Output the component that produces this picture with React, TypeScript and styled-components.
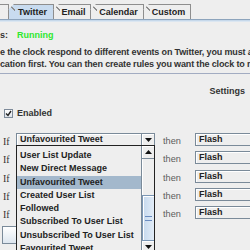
import * as React from "react";
import styled, { createGlobalStyle } from "styled-components";

const GlobalStyle = createGlobalStyle`
  html, body {
    margin: 0;
    padding: 0;
    background: #eeeeee;
    overflow: hidden;
  }
`;

const Frame = styled.div`
  width: 250px;
  height: 250px;
  overflow: hidden;
  background: #eeeeee;
  font-family: "Liberation Sans", Arial, sans-serif;
  font-size: 9px;
  font-weight: bold;
  color: #333333;
`;

const TabStrip = styled.div`
  display: flex;
  align-items: flex-end;
  height: 19px;
  border-bottom: 1px solid #8da4bc;
  box-shadow: 0 1px 0 #c6d8ea, 0 2px 0 #dbe6f1;
  margin-left: -31px;
`;

const Tab = styled.div<{ selected?: boolean; w: number }>`
  position: relative;
  box-sizing: border-box;
  flex-shrink: 0;
  width: ${p => p.w}px;
  height: 15px;
  margin-right: -1px;
  display: flex;
  align-items: center;
  justify-content: center;
  padding-left: 3px;
  border: 1px solid #8e8e8e;
  border-bottom: none;
  background: ${p => (p.selected ? "#c8dbef" : "#eeeeee")};
  clip-path: polygon(6px 0, 100% 0, 100% 100%, 0 100%, 0 6px);
  color: #222222;
  &::before {
    content: "";
    position: absolute;
    top: -1px;
    left: -1px;
    width: 7px;
    height: 7px;
    background: linear-gradient(
      to top right,
      transparent 44%,
      #8e8e8e 44%,
      #8e8e8e 58%,
      transparent 58%
    );
  }
`;

const Body = styled.div`
  padding-top: 9px;
`;

const TextLine = styled.div<{ tight?: boolean }>`
  height: 12px;
  line-height: 12px;
  white-space: nowrap;
  overflow: hidden;
  letter-spacing: ${p => (p.tight ? "-0.15px" : "normal")};
`;

const StatusValue = styled.span`
  color: #2fe82f;
  margin-left: 9px;
`;

const Intro = styled.div`
  margin-top: 5px;
`;

const Separator = styled.div`
  margin-top: 3px;
  height: 1px;
  background: #a2acc2;
`;

const SettingsHead = styled.div`
  margin-top: 11px;
  height: 12px;
  line-height: 12px;
  text-align: right;
  padding-right: 5px;
`;

const CheckRow = styled.label`
  margin-top: 10px;
  display: flex;
  align-items: center;
  gap: 4px;
  padding-left: 4px;
  height: 12px;
`;

const CheckBox = styled.span`
  box-sizing: border-box;
  width: 9px;
  height: 9px;
  border: 1px solid #7d8a99;
  background: linear-gradient(#ffffff, #dde3ea);
  display: flex;
  align-items: center;
  justify-content: center;
`;

const Rules = styled.div`
  margin-top: 14px;
  display: flex;
  flex-direction: column;
  gap: 5.3px;
`;

const Rule = styled.div`
  display: flex;
  align-items: center;
  height: 13px;
  & > * {
    flex-shrink: 0;
  }
`;

const IfLabel = styled.span`
  box-sizing: border-box;
  width: 16px;
  padding-left: 3px;
  font-family: "Liberation Serif", "Times New Roman", serif;
  font-size: 10px;
  font-weight: normal;
  color: #333333;
  margin-top: 4px;
`;

const ComboWrap = styled.div`
  position: relative;
  width: 139px;
  height: 13px;
`;

const Combo = styled.div<{ w?: number }>`
  box-sizing: border-box;
  display: flex;
  width: ${p => p.w ?? 139}px;
  height: 13px;
  border: 1px solid #7a8a99;
  background: #eeeeee;
  box-shadow: inset 1px 1px 0 #ffffff;
`;

const ComboText = styled.div`
  flex: 1;
  padding-left: 3px;
  line-height: 11px;
  white-space: nowrap;
  overflow: hidden;
  color: #222222;
`;

const ComboArrow = styled.div`
  width: 12px;
  border-left: 1px solid #7a8a99;
  display: flex;
  align-items: center;
  justify-content: center;
  background: #eeeeee;
  box-shadow: inset 1px 1px 0 #ffffff;
`;

const Then = styled.span`
  box-sizing: border-box;
  padding-left: 8px;
  width: 40px;
  font-weight: normal;
  font-size: 9.2px;
  color: #5c5c5c;
  margin-top: 3px;
`;

const ButtonStub = styled.div`
  box-sizing: border-box;
  margin-top: 7px;
  margin-left: 2px;
  width: 40px;
  height: 18px;
  border: 1px solid #7a8a99;
  background: linear-gradient(#ffffff, #dde6ef);
`;

const Popup = styled.div`
  position: absolute;
  top: 12px;
  left: 0;
  width: 139px;
  height: 120px;
  box-sizing: border-box;
  border: 1px solid #222222;
  background: #eeeeee;
  display: flex;
  z-index: 2;
`;

const List = styled.div`
  flex: 1;
  padding-top: 3px;
`;

const Item = styled.div<{ active?: boolean }>`
  height: 13.3px;
  line-height: 13.3px;
  padding-left: 3px;
  white-space: nowrap;
  overflow: hidden;
  background: ${p => (p.active ? "#a3b8cc" : "transparent")};
  color: #222222;
`;

const ScrollBar = styled.div`
  width: 13px;
  box-sizing: border-box;
  border-left: 1px solid #7a8a99;
  display: flex;
  flex-direction: column;
  background: #eeeeee;
`;

const ScrollButton = styled.div`
  height: 13px;
  box-sizing: border-box;
  border-bottom: 1px solid #7a8a99;
  display: flex;
  align-items: center;
  justify-content: center;
  box-shadow: inset 1px 1px 0 #ffffff;
`;

const Track = styled.div`
  height: 82px;
  display: flex;
  flex-direction: column;
  justify-content: flex-end;
  box-shadow: inset 1px 0 0 #ffffff;
`;

const Thumb = styled.div`
  height: 46px;
  box-sizing: border-box;
  border: 1px solid #7a96b5;
  border-right: none;
  background: linear-gradient(to right, #c6d9ee, #e2ecf7);
  display: flex;
  align-items: center;
  justify-content: center;
  box-shadow: inset 1px 1px 0 #ffffff;
`;

const Grip = styled.div`
  width: 7px;
  height: 3px;
  border-top: 1px solid #6a8cc0;
  border-bottom: 1px solid #6a8cc0;
`;

const DownTriangle = () => (
  <svg width="7" height="4" viewBox="0 0 7 4">
    <path d="M0 0H7L3.5 4Z" fill="#111111" />
  </svg>
);

const UpTriangle = () => (
  <svg width="7" height="4" viewBox="0 0 7 4">
    <path d="M0 4H7L3.5 0Z" fill="#111111" />
  </svg>
);

const events = [
  "User List Update",
  "New Direct Message",
  "Unfavourited Tweet",
  "Created User List",
  "Followed",
  "Subscribed To User List",
  "Unsubscribed To User List",
  "Favourited Tweet",
  "Unfollowed",
];

const tabs = [
  { label: "", w: 40 },
  { label: "Twitter", w: 46, selected: true },
  { label: "Email", w: 38 },
  { label: "Calendar", w: 54 },
  { label: "Custom", w: 48 },
];

const App = () => {
  return (
    <Frame>
      <GlobalStyle />
      <TabStrip>
        {tabs.map((t, i) => (
          <Tab key={i} w={t.w} selected={t.selected}>
            {t.label}
          </Tab>
        ))}
      </TabStrip>
      <Body>
        <TextLine>
          s:<StatusValue>Running</StatusValue>
        </TextLine>
        <Intro>
          <TextLine tight>e the clock respond to different events on Twitter, you must a</TextLine>
          <TextLine tight>cation first. You can then create rules you want the clock to r</TextLine>
        </Intro>
        <Separator />
        <SettingsHead>Settings</SettingsHead>
        <CheckRow>
          <CheckBox>
            <svg width="7" height="7" viewBox="0 0 7 7">
              <path d="M1 3.5L3 5.5L6 1" stroke="#222222" strokeWidth="1.4" fill="none" />
            </svg>
          </CheckBox>
          Enabled
        </CheckRow>
        <Rules>
          {[0, 1, 2, 3, 4].map(i => (
            <Rule key={i}>
              <IfLabel>If</IfLabel>
              <ComboWrap>
                <Combo>
                  <ComboText>{i === 0 ? "Unfavourited Tweet" : ""}</ComboText>
                  <ComboArrow>
                    <DownTriangle />
                  </ComboArrow>
                </Combo>
                {i === 0 && (
                  <Popup>
                    <List>
                      {events.map(e => (
                        <Item key={e} active={e === "Unfavourited Tweet"}>
                          {e}
                        </Item>
                      ))}
                    </List>
                    <ScrollBar>
                      <ScrollButton>
                        <UpTriangle />
                      </ScrollButton>
                      <Track>
                        <Thumb>
                          <Grip />
                        </Thumb>
                      </Track>
                      <ScrollButton>
                        <DownTriangle />
                      </ScrollButton>
                    </ScrollBar>
                  </Popup>
                )}
              </ComboWrap>
              <Then>then</Then>
              <Combo w={80}>
                <ComboText>Flash</ComboText>
              </Combo>
            </Rule>
          ))}
        </Rules>
        <ButtonStub />
      </Body>
    </Frame>
  );
};

export default App;
